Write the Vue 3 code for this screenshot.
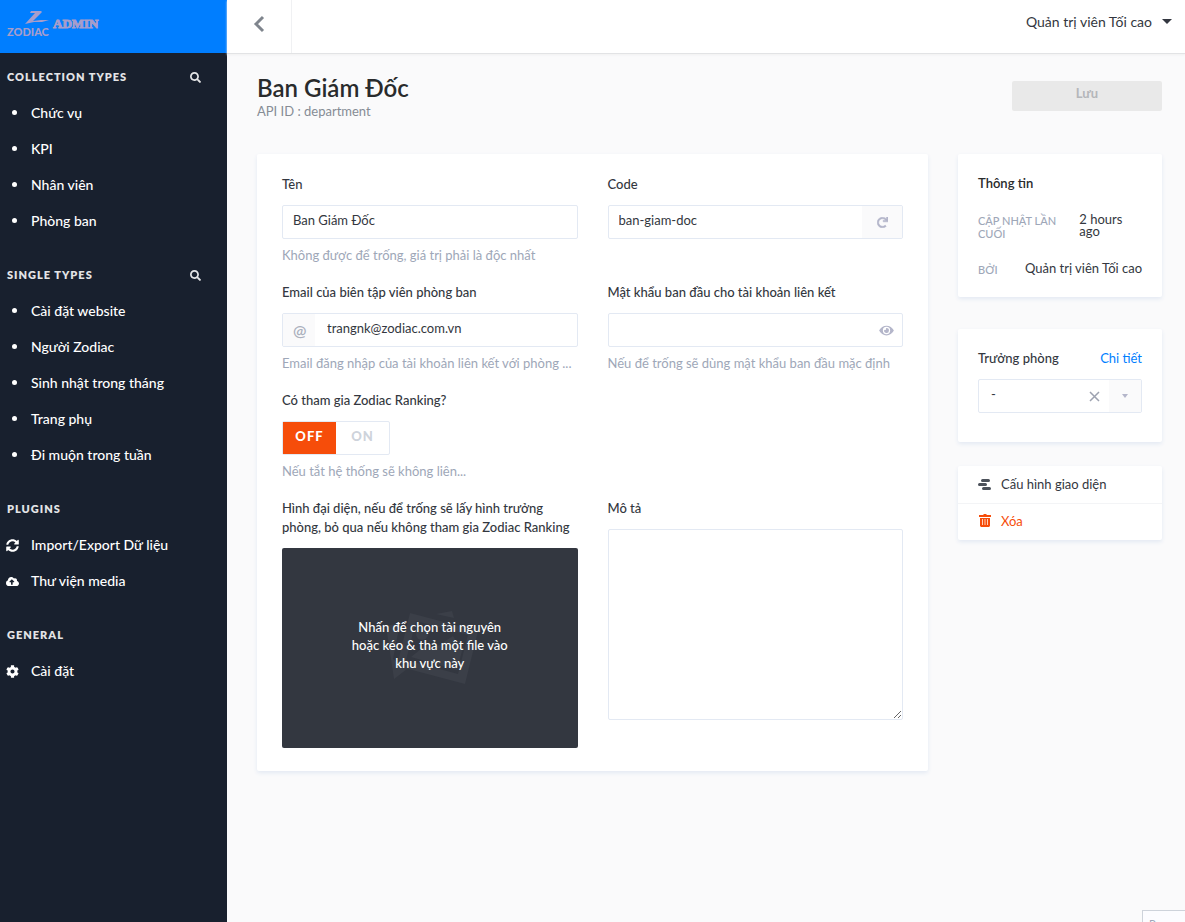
<script setup>
import { ref } from 'vue'

const paths = {
  search: 'M505 442.7L405.3 343c-4.5-4.5-10.6-7-17-7H372c27.6-35.3 44-79.7 44-128C416 93.1 322.9 0 208 0S0 93.1 0 208s93.1 208 208 208c48.3 0 92.7-16.4 128-44v16.3c0 6.4 2.5 12.5 7 17l99.7 99.7c9.4 9.4 24.6 9.4 33.9 0l28.3-28.3c9.4-9.4 9.4-24.6.1-34zM208 336c-70.7 0-128-57.2-128-128 0-70.7 57.2-128 128-128 70.7 0 128 57.2 128 128 0 70.7-57.2 128-128 128z',
  sync: 'M370.72 133.28C339.458 104.008 298.888 87.962 255.848 88c-77.458.068-144.328 53.178-162.791 126.85-1.344 5.363-6.122 9.15-11.651 9.15H24.103c-7.498 0-13.194-6.807-11.807-14.176C33.933 94.924 134.813 8 256 8c66.448 0 126.791 26.136 171.315 68.685L463.03 40.97C478.149 25.851 504 36.559 504 57.941V192c0 13.255-10.745 24-24 24H345.941c-21.382 0-32.09-25.851-16.971-40.971l41.75-41.749zM32 296h134.059c21.382 0 32.09 25.851 16.971 40.971l-41.75 41.75c31.262 29.273 71.835 45.319 114.876 45.28 77.418-.07 144.315-53.144 162.787-126.849 1.344-5.363 6.122-9.15 11.651-9.15h57.304c7.498 0 13.194 6.807 11.807 14.176C478.067 417.076 377.187 504 256 504c-66.448 0-126.791-26.136-171.315-68.685L48.97 471.03C33.851 486.149 8 475.441 8 454.059V320c0-13.255 10.745-24 24-24z',
  cloud: 'M537.6 226.6c4.1-10.7 6.4-22.4 6.4-34.6 0-53-43-96-96-96-19.7 0-38.1 6-53.3 16.2C367 64.2 315.3 32 256 32c-88.4 0-160 71.6-160 160 0 2.7.1 5.4.2 8.1C40.2 219.8 0 273.2 0 336c0 79.5 64.5 144 144 144h368c70.7 0 128-57.3 128-128 0-61.9-44-113.6-102.4-125.4zM393.4 288H328v112c0 8.8-7.2 16-16 16h-48c-8.8 0-16-7.2-16-16V288h-65.4c-14.3 0-21.4-17.2-11.3-27.3l105.4-105.4c6.2-6.2 16.4-6.2 22.6 0l105.4 105.4c10.1 10.1 2.9 27.3-11.3 27.3z',
  cog: 'M487.4 315.7l-42.6-24.6c4.3-23.2 4.3-47 0-70.2l42.6-24.6c4.9-2.8 7.1-8.6 5.5-14-11.1-35.6-30-67.8-54.7-94.6-3.8-4.1-10-5.1-14.8-2.3L380.8 110c-17.9-15.4-38.5-27.3-60.8-35.1V25.8c0-5.6-3.9-10.5-9.4-11.7-36.7-8.2-74.3-7.8-109.2 0-5.5 1.2-9.4 6.1-9.4 11.7V75c-22.2 7.9-42.8 19.8-60.8 35.1L88.7 85.5c-4.9-2.8-11-1.9-14.8 2.3-24.7 26.7-43.6 58.9-54.7 94.6-1.7 5.4.6 11.2 5.5 14L67.3 221c-4.3 23.2-4.3 47 0 70.2l-42.6 24.6c-4.9 2.8-7.1 8.6-5.5 14 11.1 35.6 30 67.8 54.7 94.6 3.8 4.1 10 5.1 14.8 2.3l42.6-24.6c17.9 15.4 38.5 27.3 60.8 35.1v49.2c0 5.6 3.9 10.5 9.4 11.7 36.7 8.2 74.3 7.8 109.2 0 5.5-1.2 9.4-6.1 9.4-11.7v-49.2c22.2-7.9 42.8-19.8 60.8-35.1l42.6 24.6c4.9 2.8 11 1.9 14.8-2.3 24.7-26.7 43.6-58.9 54.7-94.6 1.5-5.5-.7-11.3-5.6-14.1zM256 336c-44.1 0-80-35.9-80-80s35.9-80 80-80 80 35.9 80 80-35.9 80-80 80z',
  redo: 'M500.33 0h-47.41a12 12 0 0 0-12 12.57l4 82.76A247.42 247.42 0 0 0 256 8C119.34 8 7.9 119.53 8 256.19 8.1 393.07 119.1 504 256 504a247.1 247.1 0 0 0 166.18-63.91 12 12 0 0 0 .48-17.43l-34-34a12 12 0 0 0-16.38-.55A176 176 0 1 1 402.1 157.8l-101.53-4.87a12 12 0 0 0-12.57 12v47.41a12 12 0 0 0 12 12h200.33a12 12 0 0 0 12-12V12a12 12 0 0 0-12-12z',
  eye: 'M572.52 241.4C518.29 135.59 410.93 64 288 64S57.68 135.64 3.48 241.41a32.35 32.35 0 0 0 0 29.19C57.71 376.41 165.07 448 288 448s230.32-71.64 284.52-177.41a32.35 32.35 0 0 0 0-29.19zM288 400a144 144 0 1 1 144-144 143.93 143.93 0 0 1-144 144zm0-240a95.31 95.31 0 0 0-25.31 3.79 47.85 47.85 0 0 1-66.9 66.9A95.78 95.78 0 1 0 288 160z'
}

const sections = [
  {
    title: 'Collection Types',
    search: true,
    items: [{ label: 'Chức vụ' }, { label: 'KPI' }, { label: 'Nhân viên' }, { label: 'Phòng ban' }]
  },
  {
    title: 'Single Types',
    search: true,
    items: [
      { label: 'Cài đặt website' },
      { label: 'Người Zodiac' },
      { label: 'Sinh nhật trong tháng' },
      { label: 'Trang phụ' },
      { label: 'Đi muộn trong tuần' }
    ]
  },
  {
    title: 'Plugins',
    items: [
      { label: 'Import/Export Dữ liệu', icon: 'sync', box: '0 0 512 512' },
      { label: 'Thư viện media', icon: 'cloud', box: '0 0 640 512' }
    ]
  },
  { title: 'General', items: [{ label: 'Cài đặt', icon: 'cog', box: '0 0 512 512' }] }
]

const name = ref('Ban Giám Đốc')
const code = ref('ban-giam-doc')
const email = ref('trangnk@zodiac.com.vn')
const password = ref('')
const description = ref('')
const ranking = ref(false)
const head = ref('-')
</script>

<template>
  <div class="app">
    <aside class="sidebar">
      <a class="brand" href="#" aria-label="Zodiac Admin">
        <svg class="brand-logo" width="96" height="32" viewBox="0 0 96 32" aria-hidden="true">
          <path d="M24 1h10l1 1-9 9 8-1h8l-7 2h-8l-9 2 10-11h-5z" />
          <text class="brand-zodiac" x="0" y="26">ZODIAC</text>
          <text class="brand-admin" x="46" y="18">ADMIN</text>
        </svg>
      </a>
      <nav class="menu">
        <section v-for="section in sections" :key="section.title" class="menu-section">
          <header class="menu-head">
            <h2>{{ section.title }}</h2>
            <button v-if="section.search" type="button" class="menu-search" aria-label="Tìm kiếm">
              <svg width="11" height="11" viewBox="0 0 512 512"><path :d="paths.search" /></svg>
            </button>
          </header>
          <ul>
            <li v-for="item in section.items" :key="item.label">
              <a href="#">
                <span class="menu-icon">
                  <svg v-if="item.icon" width="13" height="13" :viewBox="item.box"><path :d="paths[item.icon]" /></svg>
                  <span v-else class="dot"></span>
                </span>
                <span>{{ item.label }}</span>
              </a>
            </li>
          </ul>
        </section>
      </nav>
    </aside>

    <div class="page">
      <header class="topbar">
        <button type="button" class="back" aria-label="Quay lại">
          <svg width="12" height="18" viewBox="0 0 12 18"><path d="M10 2L3 9l7 7" /></svg>
        </button>
        <button type="button" class="user">
          <span>Quản trị viên Tối cao</span>
          <svg width="10" height="5" viewBox="0 0 10 5"><path d="M0 0h10L5 5z" /></svg>
        </button>
      </header>

      <main class="content">
        <div class="heading">
          <div>
            <h1>Ban Giám Đốc</h1>
            <p>API ID : department</p>
          </div>
          <button type="button" class="save" disabled>Lưu</button>
        </div>

        <div class="columns">
          <form class="card form" @submit.prevent>
            <div class="field">
              <label for="name">Tên</label>
              <div class="control"><input id="name" v-model="name" type="text" /></div>
              <p class="help">Không được để trống, giá trị phải là độc nhất</p>
            </div>
            <div class="field">
              <label for="code">Code</label>
              <div class="control">
                <input id="code" v-model="code" type="text" />
                <button type="button" class="regenerate" aria-label="Tạo lại">
                  <svg width="11" height="11" viewBox="0 0 512 512"><path :d="paths.redo" /></svg>
                </button>
              </div>
            </div>
            <div class="field">
              <label for="email">Email của biên tập viên phòng ban</label>
              <div class="control">
                <span class="addon">@</span>
                <input id="email" v-model="email" type="email" />
              </div>
              <p class="help">Email đăng nhập của tài khoản liên kết với phòng ...</p>
            </div>
            <div class="field">
              <label for="password">Mật khẩu ban đầu cho tài khoản liên kết</label>
              <div class="control">
                <input id="password" v-model="password" type="password" />
                <button type="button" class="reveal" aria-label="Hiện mật khẩu">
                  <svg width="15" height="13" viewBox="0 0 576 512"><path :d="paths.eye" /></svg>
                </button>
              </div>
              <p class="help">Nếu để trống sẽ dùng mật khẩu ban đầu mặc định</p>
            </div>
            <div class="field wide">
              <span id="ranking-label" class="label">Có tham gia Zodiac Ranking?</span>
              <div class="toggle" role="group" aria-labelledby="ranking-label">
                <button type="button" :class="{ off: !ranking }" @click="ranking = false">OFF</button>
                <button type="button" :class="{ on: ranking }" @click="ranking = true">ON</button>
              </div>
              <p class="help">Nếu tắt hệ thống sẽ không liên...</p>
            </div>
            <div class="field">
              <span class="label">Hình đại diện, nếu để trống sẽ lấy hình trưởng phòng, bỏ qua nếu không tham gia Zodiac Ranking</span>
              <button type="button" class="drop">
                <svg class="drop-art" width="96" height="76" viewBox="0 0 96 76" aria-hidden="true">
                  <path d="M4 16l14-3-7 36 14 10-13 10zM54 4l16-3 2 7z" />
                  <path d="M28 3l68 18-13 53-68-18zM34 11L24 50l52 14 10-39z" fill-rule="evenodd" />
                  <circle cx="40" cy="24" r="6" />
                  <path d="M29 47l15-12 7 4 20-13 9 15-5 19z" />
                </svg>
                <span>Nhấn để chọn tài nguyên hoặc kéo &amp; thả một file vào khu vực này</span>
              </button>
            </div>
            <div class="field">
              <label for="description">Mô tả</label>
              <textarea id="description" v-model="description"></textarea>
            </div>
          </form>

          <div class="side">
            <section class="card info">
              <h2>Thông tin</h2>
              <dl>
                <div><dt>Cập nhật lần cuối</dt><dd>2 hours ago</dd></div>
                <div><dt>Bởi</dt><dd>Quản trị viên Tối cao</dd></div>
              </dl>
            </section>

            <section class="card relation">
              <div class="relation-head">
                <label for="head">Trưởng phòng</label>
                <a href="#">Chi tiết</a>
              </div>
              <div class="control">
                <select id="head" v-model="head"><option>-</option></select>
                <button type="button" class="clear" aria-label="Xóa lựa chọn">
                  <svg width="11" height="11" viewBox="0 0 11 11"><path d="M1 1l9 9M10 1l-9 9" /></svg>
                </button>
                <span class="arrow"><svg width="6" height="4" viewBox="0 0 6 4"><path d="M0 0h6L3 4z" /></svg></span>
              </div>
            </section>

            <ul class="card actions">
              <li>
                <a href="#">
                  <svg width="13" height="11" viewBox="0 0 13 11">
                    <path d="M4.500 1.500h6M1.500 5.500h6M5.500 9.500h6" stroke="#4b515a" stroke-width="3" stroke-linecap="round" />
                  </svg>
                  <span>Cấu hình giao diện</span>
                </a>
              </li>
              <li>
                <button type="button" class="delete">
                  <svg width="13" height="13" viewBox="0 0 13 13">
                    <path d="M1 1h4l1-1h2l1 1h4v2H1z" fill="#f64d0a" />
                    <path d="M2 4h10v8l-1 1H3l-1-1z" fill="#f64d0a" />
                    <path d="M4.500 5v6M7 5v6M9.500 5v6" stroke="#ffd0ba" />
                  </svg>
                  <span>Xóa</span>
                </button>
              </li>
            </ul>
          </div>
        </div>
      </main>
    </div>

    <div class="corner-note">Powered</div>
  </div>
</template>

<style>
body {
  margin: 0;
  background: #fafafb;
}
</style>

<style scoped>
.app,
.app * {
  box-sizing: border-box;
}
.app {
  display: flex;
  min-height: 100vh;
  font-family: Lato, "Open Sans", sans-serif;
  font-size: 13px;
  color: #333740;
}
h1,
h2,
p,
ul,
dl,
dd {
  margin: 0;
  padding: 0;
}
ul {
  list-style: none;
}
a {
  color: inherit;
  text-decoration: none;
}
svg {
  display: block;
  flex: none;
}
button,
input,
select,
textarea {
  font: inherit;
  color: inherit;
}
button {
  padding: 0;
  border: 0;
  background: none;
}

/* Sidebar */
.sidebar {
  flex: none;
  width: 227px;
  background: #18202e;
}
.brand {
  display: block;
  height: 53px;
  padding: 10px 7px;
  background: #007eff;
}
.brand-logo {
  fill: #a79dcb;
}
.brand-zodiac {
  font-size: 11px;
  font-weight: 900;
}
.brand-admin {
  font-family: "Liberation Serif", serif;
  font-size: 13px;
  font-weight: 700;
  stroke: #a79dcb;
  stroke-width: 1;
}
.menu {
  display: grid;
  gap: 18px;
  padding: 6px 7px 18px;
  color: #fff;
}
.menu-head {
  display: flex;
  align-items: center;
  justify-content: space-between;
  height: 36px;
  padding-right: 19px;
}
.menu-head h2 {
  font-size: 11px;
  font-weight: 800;
  line-height: 16px;
  letter-spacing: 1px;
  text-transform: uppercase;
  color: #e3e4e6;
}
.menu-search svg {
  fill: #e3e4e6;
}
.menu a {
  display: flex;
  align-items: center;
  height: 36px;
  padding-bottom: 2px;
  font-size: 14px;
  font-weight: 500;
}
.menu-icon {
  display: flex;
  flex: none;
  width: 24px;
}
.menu-icon svg {
  fill: #fff;
  margin: 2px 0 0 -1px;
}
.dot {
  width: 5px;
  height: 5px;
  margin-left: 5px;
  border-radius: 50%;
  background: #fff;
}

/* Page */
.page {
  flex: 1;
  min-width: 0;
}
.topbar {
  display: flex;
  justify-content: space-between;
  height: 54px;
  background: #fff;
  border-bottom: 1px solid #e2e3e5;
  box-shadow: 0 1px 2px #f0f0f1;
}
.back {
  display: grid;
  place-items: center;
  width: 65px;
  padding-bottom: 5px;
  border-right: 1px solid #f0f1f3;
}
.back path {
  fill: none;
  stroke: #7f858d;
  stroke-width: 3;
}
.user {
  display: flex;
  align-items: center;
  gap: 10px;
  padding: 0 13px 10px;
  font-size: 14px;
}
.user svg {
  fill: #333740;
}
.content {
  padding: 20px 23px 30px 30px;
}
.heading {
  display: flex;
  justify-content: space-between;
  align-items: flex-start;
  height: 80px;
}
h1 {
  font-size: 24px;
  font-weight: 600;
  line-height: 28px;
  color: #292b2c;
}
.heading p {
  line-height: 18px;
  color: #868c95;
}
.save {
  width: 150px;
  height: 30px;
  margin-top: 7px;
  padding-bottom: 6px;
  border-radius: 2px;
  background: #e9e9e9;
  font-weight: 700;
  color: #b4b6ba;
}
.columns {
  display: grid;
  grid-template-columns: minmax(0, 1fr) 204px;
  gap: 30px;
  align-items: start;
}
.card {
  background: #fff;
  border-radius: 2px;
  box-shadow: 0 2px 4px #e3e9f3;
}

/* Form */
.form {
  display: grid;
  grid-template-columns: repeat(2, minmax(0, 1fr));
  gap: 19px 30px;
  padding: 21px 25px 23px;
}
.field {
  min-width: 0;
}
.wide {
  grid-column: 1 / -1;
}
.field label,
.label,
.relation label {
  display: block;
  line-height: 19px;
  font-weight: 500;
}
.field label,
.label {
  margin-bottom: 11px;
}
.control {
  display: flex;
  height: 34px;
  border: 1px solid #e3e9f3;
  border-radius: 2px;
  overflow: hidden;
  background: #fff;
}
.control input,
.control select {
  flex: 1;
  width: 0;
  min-width: 0;
  padding: 0 10px 4px;
  border: 0;
  outline: 0;
  background: none;
  appearance: none;
}
.addon {
  width: 32px;
  padding-left: 10px;
  line-height: 32px;
  font-size: 16px;
  background: #fafafb;
  color: #aab0bd;
  font-weight: 600;
}
.control .addon + input {
  padding-left: 12px;
}
.regenerate,
.reveal,
.clear,
.arrow {
  display: grid;
  place-items: center;
  fill: #b4b6ca;
}
.regenerate {
  width: 40px;
  background: #fafafb;
}
.regenerate svg {
  stroke: #b4b6ca;
  stroke-width: 24;
}
.reveal {
  width: 32px;
}
.help {
  margin-top: 7px;
  line-height: 18px;
  color: #9ea7b8;
}
.toggle {
  display: flex;
  width: 108px;
  height: 34px;
  border: 1px solid #e3e9f3;
  border-radius: 2px;
}
.toggle button {
  flex: 1;
  padding-bottom: 4px;
  font-weight: 900;
  letter-spacing: 1px;
  color: #ced3db;
}
.toggle .off {
  background: #f64d0a;
  color: #fff;
}
.toggle .on {
  background: #007eff;
  color: #fff;
}
.drop {
  position: relative;
  display: grid;
  place-items: center;
  width: 100%;
  height: 200px;
  padding-bottom: 6px;
  border-radius: 2px;
  background: #333740;
  line-height: 18px;
  font-weight: 500;
  color: #fff;
}
.drop span {
  position: relative;
  width: 166px;
}
.drop-art {
  position: absolute;
  inset: 0;
  margin: auto;
  fill: #3b3f48;
}
textarea {
  display: block;
  width: 100%;
  height: 191px;
  padding: 8px 10px;
  border: 1px solid #e3e9f3;
  border-radius: 2px;
  outline: 0;
  resize: vertical;
}

/* Side column */
.info {
  min-height: 143px;
  padding: 20px;
}
.info h2 {
  font-size: 13px;
  font-weight: 600;
  line-height: 19px;
  color: #292b2c;
}
.info dl {
  display: grid;
  gap: 22px;
  margin-top: 20px;
}
.info dl div {
  display: flex;
  justify-content: space-between;
}
.info dt {
  padding-top: 1px;
  font-size: 11px;
  line-height: 13px;
  font-weight: 500;
  text-transform: uppercase;
  color: #9ea7b8;
}
.info dd {
  line-height: 12px;
}
.relation {
  min-height: 113px;
  margin-top: 32px;
  padding: 20px;
}
.relation-head {
  display: flex;
  justify-content: space-between;
  line-height: 19px;
  margin-bottom: 11px;
}
.relation a {
  color: #007eff;
}
.control select {
  padding-left: 12px;
}
.clear {
  width: 29px;
}
.clear path {
  stroke: #9da2b0;
  stroke-width: 1.5;
}
.arrow {
  width: 32px;
  background: #fafafb;
}
.actions {
  margin-top: 24px;
}
.actions li + li {
  border-top: 1px solid #f3f4f6;
}
.actions a,
.actions button {
  display: flex;
  align-items: center;
  gap: 10px;
  width: 100%;
  height: 37px;
  padding: 0 20px 1px;
}
.actions .delete {
  height: 36px;
  padding-bottom: 3px;
  color: #f64d0a;
}
.corner-note {
  position: fixed;
  right: 0;
  bottom: 0;
  width: 43px;
  height: 12px;
  padding: 6px 0 0 6px;
  overflow: hidden;
  border: 1px solid #ced3db;
  border-width: 1px 0 0 1px;
  background: #fcfcff;
  font-size: 11px;
  line-height: 13px;
  color: #9ea7b8;
}
</style>
